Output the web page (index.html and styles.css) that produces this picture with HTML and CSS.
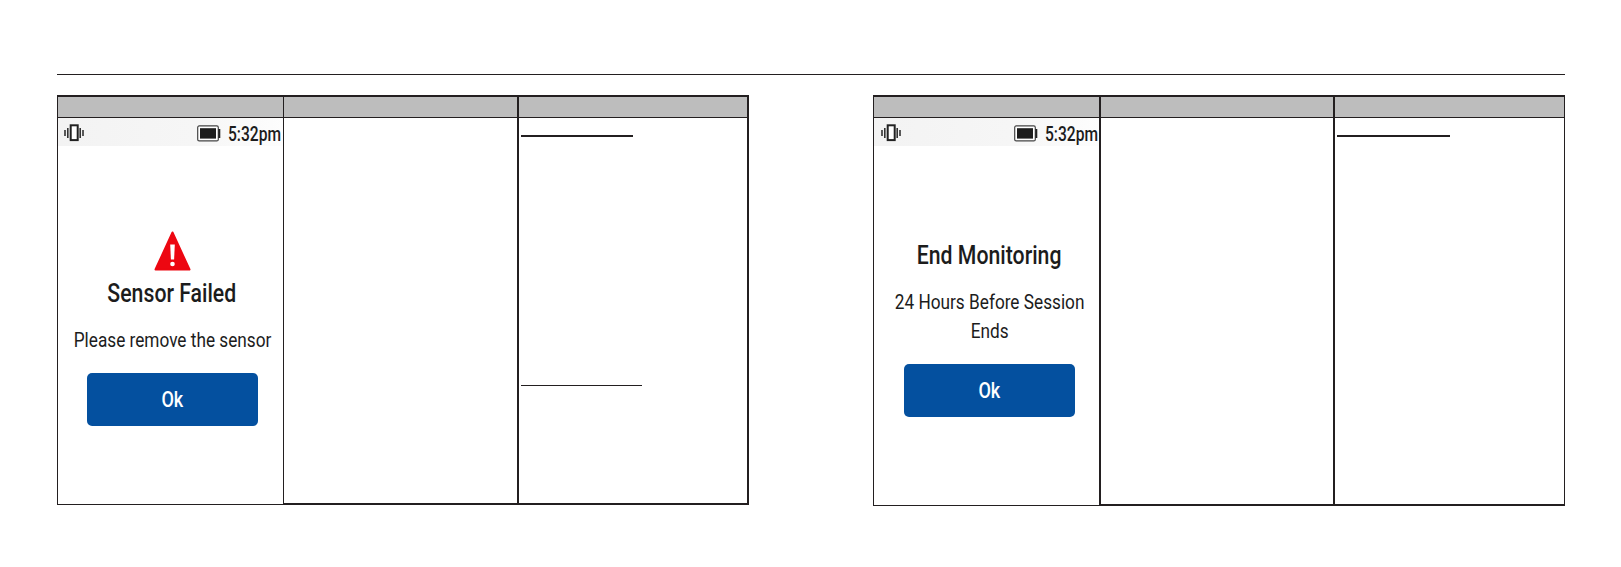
FILE: index.html
```html
<!DOCTYPE html>
<html lang="en">
<head>
    <meta charset="UTF-8">
    <meta name="viewport" content="width=device-width, initial-scale=1.0">
    <title>Sensor Alerts</title>
    <link rel="stylesheet" href="styles.css">
</head>
<body>
    <div class="page">
        <div class="rule"></div>
        <div class="tables">
            <div class="alertTable failedTable">
                <div class="column screenColumn">
                    <div class="columnHeader"></div>
                    <div class="screen">
                        <div class="statusBar">
                            <svg class="vibrate" viewBox="0 0 20 18" width="20" height="18">
                                <rect x="6.7" y="1.3" width="7" height="14.8" fill="#fff" stroke="#222" stroke-width="2"/>
                                <path d="M1 6v6M3.8 4v10M16.2 4v10M19 6v6" stroke="#333" stroke-width="1.6"/>
                            </svg>
                            <svg class="battery" viewBox="0 0 24 17" width="24" height="17">
                                <rect x=".7" y=".9" width="20.6" height="15" rx="1.5" fill="#fff" stroke="#444" stroke-width="1.2"/>
                                <rect x="3" y="3.2" width="16" height="10.4" fill="#1c1c1c"/>
                                <path d="M22.3 4v9" stroke="#222" stroke-width="2"/>
                            </svg>
                            <span class="time">5:32pm</span>
                        </div>
                        <svg class="warning" viewBox="0 0 37 40" width="37" height="40">
                            <path d="M18.5 1.5L35.5 38.5H1.5z" fill="#ed0711" stroke="#ed0711" stroke-width="2" stroke-linejoin="round"/>
                            <path d="M16.2 13.5h4.6l-.7 15h-3.2z" fill="#fff"/>
                            <circle cx="18.5" cy="33" r="2.3" fill="#fff"/>
                        </svg>
                        <h1 class="title">Sensor Failed</h1>
                        <p class="message">Please remove the sensor</p>
                        <button class="okBtn"><span>Ok</span></button>
                    </div>
                </div>
                <div class="column meaningColumn">
                    <div class="columnHeader"></div>
                </div>
                <div class="column actionColumn">
                    <div class="columnHeader"></div>
                    <div class="line"></div>
                    <div class="line thinLine"></div>
                </div>
            </div>
            <div class="alertTable endTable">
                <div class="column screenColumn">
                    <div class="columnHeader"></div>
                    <div class="screen">
                        <div class="statusBar">
                            <svg class="vibrate" viewBox="0 0 20 18" width="20" height="18">
                                <rect x="6.7" y="1.3" width="7" height="14.8" fill="#fff" stroke="#222" stroke-width="2"/>
                                <path d="M1 6v6M3.8 4v10M16.2 4v10M19 6v6" stroke="#333" stroke-width="1.6"/>
                            </svg>
                            <svg class="battery" viewBox="0 0 24 17" width="24" height="17">
                                <rect x=".7" y=".9" width="20.6" height="15" rx="1.5" fill="#fff" stroke="#444" stroke-width="1.2"/>
                                <rect x="3" y="3.2" width="16" height="10.4" fill="#1c1c1c"/>
                                <path d="M22.3 4v9" stroke="#222" stroke-width="2"/>
                            </svg>
                            <span class="time">5:32pm</span>
                        </div>
                        <h1 class="title">End Monitoring</h1>
                        <p class="message">24 Hours Before Session<br>Ends</p>
                        <button class="okBtn"><span>Ok</span></button>
                    </div>
                </div>
                <div class="column meaningColumn">
                    <div class="columnHeader"></div>
                </div>
                <div class="column actionColumn">
                    <div class="columnHeader"></div>
                    <div class="line"></div>
                </div>
            </div>
        </div>
    </div>
</body>
</html>
```
FILE: styles.css
```css
* {
    box-sizing: border-box;
}
body {
    margin: 0;
    background: #fff;
    font-family: Roboto, Arial, sans-serif;
    color: #1c1c1c;
}
.page {
    padding: 74px 56px 0 57px;
}
.rule {
    height: 1px;
    background: #231f20;
}
.tables {
    display: flex;
    justify-content: space-between;
    align-items: flex-start;
    margin-top: 20px;
}
.alertTable {
    display: flex;
    align-items: stretch;
    width: 692px;
    height: 410px;
    border-top: 2px solid #231f20;
}
.endTable {
    height: 411px;
}
.column {
    border: 0 solid #231f20;
    border-right-width: 2px;
    border-bottom-width: 2px;
}
.screenColumn {
    width: 227px;
    border-left-width: 1px;
    border-right-width: 1px;
    border-bottom-width: 1px;
}
.endTable .screenColumn {
    width: 228px;
    border-right-width: 2px;
}
.meaningColumn {
    width: 235px;
}
.endTable .meaningColumn {
    width: 234px;
}
.actionColumn {
    width: 230px;
}
.endTable .actionColumn {
    border-right-width: 1px;
}
.columnHeader {
    height: 21px;
    background: #bdbdbd;
    border-bottom: 1px solid #231f20;
}
.line {
    width: 112px;
    height: 2px;
    margin: 17px 0 0 2px;
    background: #231f20;
}
.endTable .line {
    width: 113px;
}
.thinLine {
    width: 121px;
    height: 1px;
    margin-top: 248px;
}
.screen {
    display: flex;
    flex-direction: column;
    align-items: center;
}
.statusBar {
    display: flex;
    align-self: stretch;
    height: 28px;
    padding: 6px 0 0 6px;
    background: linear-gradient(90deg, #f3f3f3, #f6f6f6 60%, #fdfdfd);
}
.endTable .statusBar {
    padding-left: 7px;
}
.statusBar svg {
    flex-shrink: 0;
}
.battery {
    margin: 1px 0 0 113px;
}
.time {
    margin: -2px 0 0 7px;
    font-size: 20.5px;
    font-weight: 500;
    line-height: 24px;
    white-space: nowrap;
    transform: scaleX(.76);
    transform-origin: left;
}
.warning {
    margin: 85px 0 0 4px;
}
.title {
    margin: 8px 0 0 3px;
    font-size: 25px;
    font-weight: 500;
    line-height: 30px;
    white-space: nowrap;
    transform: scaleX(.85);
}
.endTable .title {
    margin: 95px 0 0 6px;
}
.message {
    margin: 17px 0 0 4px;
    font-size: 21px;
    line-height: 29px;
    text-align: center;
    white-space: nowrap;
    transform: scaleX(.82);
}
.okBtn {
    width: 171px;
    height: 53px;
    margin: 18px 0 0 4px;
    padding: 0;
    border: none;
    border-radius: 5px;
    background: #04509f;
    color: #fff;
    font-family: inherit;
    font-size: 22px;
    font-weight: 500;
}
.endTable .message,
.endTable .okBtn {
    margin-left: 6px;
}
.okBtn span {
    display: inline-block;
    transform: scaleX(.82);
}
```
